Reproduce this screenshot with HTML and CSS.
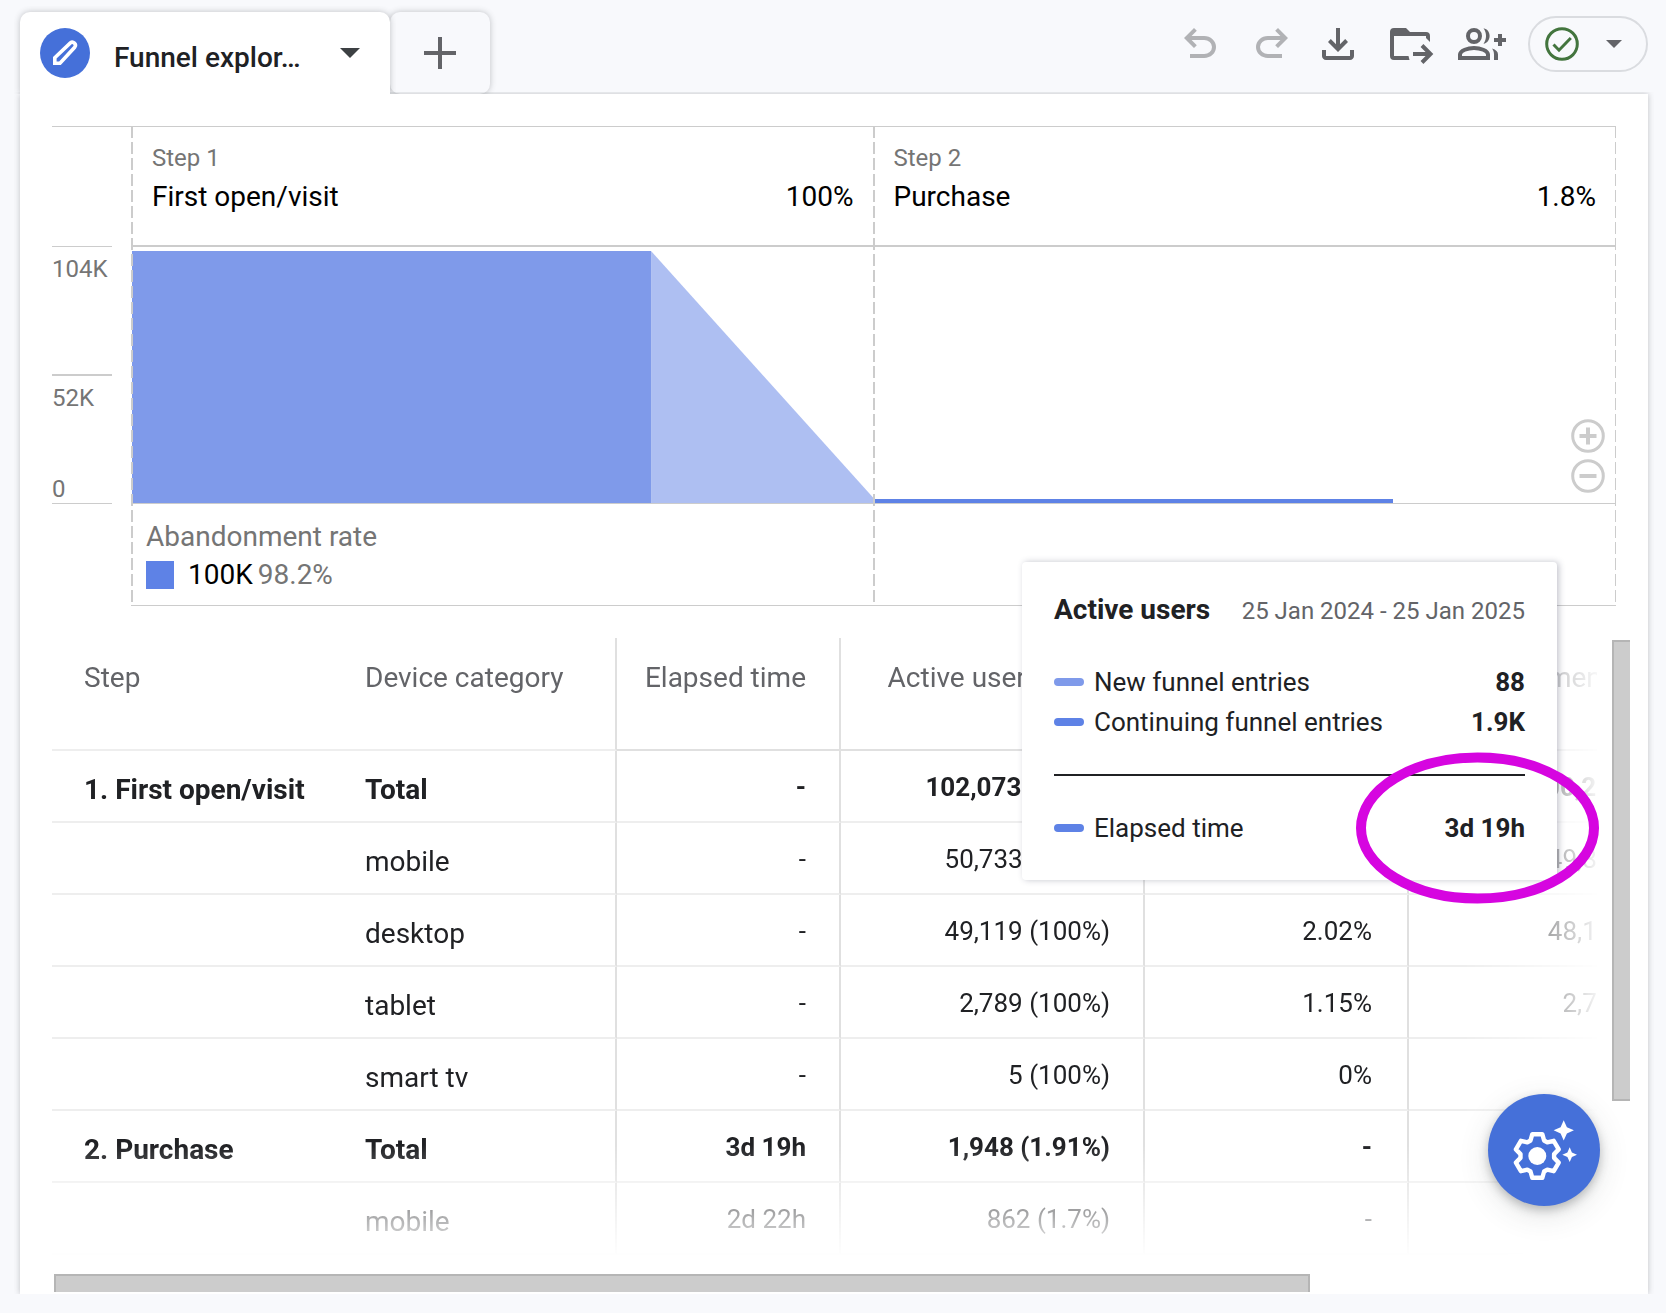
FILE: index.html
```html
<!DOCTYPE html>
<html lang="en">
<head>
<meta charset="utf-8">
<title>Funnel exploration</title>
<link rel="stylesheet" href="styles.css">
</head>
<body>
<header class="topbar">
  <div class="tab tab-active">
    <span class="tab-badge">
      <svg width="50" height="50" viewBox="0 0 50 50" aria-hidden="true"><path d="M14.8 35.2v-5.4L30.4 14.9q2-1.7 4 .2t.3 4.2L20 35.2z" fill="none" stroke="#fff" stroke-width="3.6"/></svg>
    </span>
    <span class="tab-title">Funnel explor…</span>
    <button class="icon-button tab-menu" type="button" aria-label="Tab menu">
      <svg width="20" height="10" viewBox="0 0 20 10"><path d="M0 0h20L10 10z" fill="#3c4043"/></svg>
    </button>
  </div>
  <button class="tab tab-add" type="button" aria-label="Add tab">
    <svg width="32" height="32" viewBox="0 0 32 32"><path d="M16 0v32M0 16h32" stroke="#636468" stroke-width="4"/></svg>
  </button>
  <div class="toolbar">
    <div class="tool-group history">
      <button class="icon-button" type="button" aria-label="Undo" disabled>
        <svg width="48" height="48" viewBox="0 -960 960 960"><path fill="#b1b2b5" d="M280-200v-80h284q63 0 109.500-40T720-420q0-60-46.500-100T564-560H312l104 104-56 56-200-200 200-200 56 56-104 104h252q97 0 166.500 63T800-420q0 94-69.500 157T564-200H280Z"/></svg>
      </button>
      <button class="icon-button" type="button" aria-label="Redo" disabled>
        <svg width="48" height="48" viewBox="0 -960 960 960"><path fill="#b1b2b5" transform="matrix(-1 0 0 1 960 0)" d="M280-200v-80h284q63 0 109.500-40T720-420q0-60-46.500-100T564-560H312l104 104-56 56-200-200 200-200 56 56-104 104h252q97 0 166.500 63T800-420q0 94-69.500 157T564-200H280Z"/></svg>
      </button>
    </div>
    <div class="tool-group files">
      <button class="icon-button" type="button" aria-label="Download">
        <svg width="48" height="48" viewBox="0 -960 960 960"><path fill="#636468" d="M480-320 280-520l56-58 104 104v-326h80v326l104-104 56 58-200 200ZM240-160q-33 0-56.500-23.500T160-240v-120h80v120h480v-120h80v120q0 33-23.500 56.500T720-160H240Z"/></svg>
      </button>
      <button class="icon-button" type="button" aria-label="Move to folder">
        <svg width="48" height="48" viewBox="0 0 48 48"><path fill="#636468" d="M8 8h12l4 4h16q4 0 4 4v6l-4-4v-2H8v20h14.500l1 4H8q-4 0-4-4V12q0-4 4-4z"/><path d="M27 34h18M36 25.500l8.500 8.500-8.500 8.500" fill="none" stroke="#636468" stroke-width="4"/></svg>
      </button>
      <button class="icon-button" type="button" aria-label="Share">
        <svg width="48" height="48" viewBox="0 0 48 48"><g fill="none" stroke="#636468" stroke-width="4"><circle cx="16" cy="16" r="6"/><path d="M2 38v-3.500c0-4 8-6.500 14-6.500s14 2.500 14 6.500V38z"/><path d="M36 20h12M42 14v12"/></g><path fill="#636468" d="M25.500 8.200c8.200 1.500 8.200 14 0 15.600 3.400-4.600 3.400-11 0-15.600zM34 28.500c4 1.200 6 3.300 6 6V40h-4v-5.500c0-2.600-.8-4.600-2-6z"/></svg>
      </button>
    </div>
    <button class="status-pill" type="button" aria-label="Sampling status">
      <svg width="34" height="34" viewBox="0 0 34 34"><g fill="none" stroke="#43753e" stroke-width="3"><circle cx="17" cy="17" r="15.300"/><path d="M8.500 17.500l5.500 5.700L25.800 11"/></g></svg>
      <svg width="16" height="8" viewBox="0 0 16 8"><path d="M0 0h16L8 8z" fill="#636468"/></svg>
    </button>
  </div>
</header>

<main class="panel">
  <section class="chart" aria-label="Funnel chart">
    <div class="axis">
      <div class="tick tick-max">104K</div>
      <div class="tick tick-mid">52K</div>
      <div class="tick tick-zero">0</div>
    </div>
    <div class="step">
      <div class="step-head">
        <div class="step-index">Step 1</div>
        <div class="step-line"><span>First open/visit</span><span>100%</span></div>
      </div>
      <div class="plot">
        <div class="bar bar-new"></div>
        <div class="drop"></div>
      </div>
      <div class="step-foot">
        <div class="rate-title">Abandonment rate</div>
        <div class="rate"><span class="rate-swatch"></span><span class="rate-count">100K</span><span class="rate-share">98.2%</span></div>
      </div>
    </div>
    <div class="step step-last">
      <div class="step-head">
        <div class="step-index">Step 2</div>
        <div class="step-line"><span>Purchase</span><span>1.8%</span></div>
      </div>
      <div class="plot">
        <div class="bar bar-continuing"></div>
        <div class="zoom-controls">
          <button class="icon-button" type="button" aria-label="Zoom in"><svg width="34" height="34" viewBox="0 0 34 34" fill="none" stroke="#ccc" stroke-width="3"><circle cx="17" cy="17" r="15.300"/><path d="M17 8.500v17M8.500 17h17" stroke-width="4"/></svg></button>
          <button class="icon-button" type="button" aria-label="Zoom out"><svg width="34" height="34" viewBox="0 0 34 34" fill="none" stroke="#ccc" stroke-width="3"><circle cx="17" cy="17" r="15.300"/><path d="M8.500 17h17" stroke-width="4"/></svg></button>
        </div>
      </div>
      <div class="step-foot"></div>
    </div>
  </section>

  <section class="results">
    <div class="table-view">
      <table class="funnel-table">
        <colgroup><col class="c-step"><col class="c-device"><col class="c-elapsed"><col class="c-users"><col class="c-completion"><col class="c-abandon"></colgroup>
        <thead>
          <tr><th scope="col">Step</th><th scope="col">Device category</th><th scope="col">Elapsed time</th><th scope="col">Active users (% of Step 1)</th><th scope="col">Completion rate</th><th scope="col">Abandonments</th></tr>
        </thead>
        <tbody>
          <tr class="total"><th scope="row">1. First open/visit</th><th>Total</th><td>-</td><td>102,073 (100%)</td><td>1.91%</td><td>100,205</td></tr>
          <tr><th></th><th scope="row">mobile</th><td>-</td><td>50,733 (100%)</td><td>1.7%</td><td>49,871</td></tr>
          <tr><th></th><th scope="row">desktop</th><td>-</td><td>49,119 (100%)</td><td>2.02%</td><td>48,127</td></tr>
          <tr><th></th><th scope="row">tablet</th><td>-</td><td>2,789 (100%)</td><td>1.15%</td><td>2,757</td></tr>
          <tr><th></th><th scope="row">smart tv</th><td>-</td><td>5 (100%)</td><td>0%</td><td>5</td></tr>
          <tr class="total"><th scope="row">2. Purchase</th><th>Total</th><td>3d 19h</td><td>1,948 (1.91%)</td><td>-</td><td>-</td></tr>
          <tr><th></th><th scope="row">mobile</th><td>2d 22h</td><td>862 (1.7%)</td><td>-</td><td>-</td></tr>
        </tbody>
      </table>
    </div>
    <div class="scroll-y"><div class="thumb-y"></div></div>
    <div class="scroll-x"><div class="thumb-x"></div></div>
  </section>

  <aside class="tooltip">
    <div class="tip-head"><strong>Active users</strong><span>25 Jan 2024 - 25 Jan 2025</span></div>
    <div class="tip-row"><i class="dash dash-new"></i><span>New funnel entries</span><b>88</b></div>
    <div class="tip-row"><i class="dash"></i><span>Continuing funnel entries</span><b>1.9K</b></div>
    <hr>
    <div class="tip-row"><i class="dash"></i><span>Elapsed time</span><b>3d 19h</b></div>
    <svg class="highlight" width="243" height="152" viewBox="0 0 243 152" aria-hidden="true"><ellipse cx="121.500" cy="76" rx="116.500" ry="70.500" fill="none" stroke="#d605e0" stroke-width="10"/></svg>
  </aside>

  <button class="fab" type="button" aria-label="Settings suggestions">
    <svg width="112" height="112" viewBox="0 0 112 112" fill="#fff">
      <g transform="translate(49.300 62)">
        <path fill="none" stroke="#fff" stroke-width="4.400" stroke-linejoin="round" d="M-5-21.800H5L6.800-15.500 10-13.600 16.400-15.200 21.400-6.600 16.800-1.900V1.900L21.400 6.600 16.400 15.200 10 13.600 6.800 15.500 5 21.800H-5L-6.800 15.500-10 13.600-16.400 15.200-21.400 6.600-16.800 1.900V-1.900L-21.400-6.600-16.400-15.200-10-13.600-6.800-15.500z"/>
        <circle r="9"/>
      </g>
      <path d="M75.700 26.300l3.200 6.900 7 3.100-7 3.200-3.200 7-3.100-7-7-3.200 7-3.100zM81.700 53.300l2.200 5.100 5.100 2.300-5.100 2.200-2.200 5.200-2.300-5.200-5.100-2.200 5.100-2.300z"/>
    </svg>
  </button>
</main>
</body>
</html>
```
FILE: styles.css
```css
* {
  box-sizing: border-box;
}

body {
  margin: 0;
  padding: 12px 18px 19px 20px;
  background: #f8f9fc;
  color: #202124;
  font-family: Roboto, "Liberation Sans", sans-serif;
  font-size: 28px;
  line-height: 32px;
  overflow-x: hidden;
}

button {
  font: inherit;
  color: inherit;
}

svg {
  display: block;
}

/* Top bar */
.topbar {
  display: flex;
  height: 82px;
}

.tab {
  display: flex;
  align-items: center;
  height: 82px;
  border-radius: 10px;
  box-shadow: 0 0 6px rgba(60, 64, 67, 0.3);
}

.tab-active {
  position: relative;
  z-index: 1;
  width: 370px;
  padding: 0 30px 0 20px;
  border-radius: 10px 10px 0 0;
  background: #fff;
  clip-path: inset(-6px -6px 0 -6px);
}

.tab-badge {
  border-radius: 50%;
  background: #4570d9;
}

.tab-title {
  flex: 1;
  padding: 10px 0 0 24px;
  font-weight: 500;
}

.icon-button {
  padding: 0;
  border: 0;
  background: none;
}

.tab-add {
  justify-content: center;
  width: 100px;
  padding: 0;
  border: 0;
  background: #f8f9fc;
}

.toolbar {
  display: flex;
  align-items: center;
  height: 56px;
  margin: 4px 0 0 auto;
}

.tool-group {
  display: flex;
  gap: 24px;
}

.history {
  margin-right: 18px;
}

.files {
  margin-right: 22px;
}

.status-pill {
  display: flex;
  align-items: center;
  justify-content: space-between;
  width: 120px;
  height: 56px;
  padding: 0 24px 0 15px;
  border: 2px solid #dadce0;
  border-radius: 28px;
  background: none;
}

/* Content panel */
.panel {
  position: relative;
  padding: 32px 0 2px 32px;
  background: #fff;
  box-shadow: 0 0 6px rgba(60, 64, 67, 0.3);
  clip-path: inset(-2px -6px 0 -6px);
}

/* Funnel chart */
.chart {
  display: grid;
  grid-template-columns: 79px 1fr 1fr;
  margin-right: 32px;
  border-top: 1px solid #ccc;
}

.axis {
  width: 60px;
  padding-top: 119px;
  color: #757575;
  font-size: 24px;
  line-height: 28px;
}

.tick {
  padding-top: 8px;
  border-top: 1px solid #ccc;
}

.tick-max {
  height: 128px;
}

.tick-mid {
  height: 101px;
  border-top-width: 2px;
}

.tick-zero {
  padding: 0;
  border-top: 0;
  border-bottom: 1px solid #ccc;
}

.step {
  position: relative;
}

.step::before,
.step-last::after {
  content: "";
  position: absolute;
  top: 0;
  bottom: 1px;
  left: 0;
  width: 2px;
  background: repeating-linear-gradient(#ccc 0 11px, transparent 11px 15px, #ccc 15px 16px);
}

.step::before {
  z-index: 1;
}

.step-last {
  margin-left: -1px;
}

.step-last::after {
  right: 0;
  left: auto;
  width: 1px;
}

.step-head {
  height: 120px;
  padding: 17px 20px 0 21px;
  border-bottom: 2px solid #ccc;
  color: #000;
}

.step-index {
  margin-bottom: 9px;
  color: #757575;
  font-size: 24px;
  line-height: 28px;
}

.step-line {
  display: flex;
  justify-content: space-between;
}

.plot {
  position: relative;
  display: flex;
  align-items: flex-end;
  height: 257px;
  padding-left: 1px;
  border-bottom: 1px solid #ccc;
}

.bar {
  width: 70%;
}

.bar-new {
  height: 252px;
  background: #7f9aea;
}

.bar-continuing {
  height: 4px;
  background: #5e82e6;
}

.drop {
  width: 30%;
  height: 252px;
  background: #aebff2;
  clip-path: polygon(0 0, 100% 98%, 100% 100%, 0 100%);
}

.zoom-controls {
  position: absolute;
  right: 11px;
  bottom: 10px;
  display: grid;
  gap: 6px;
}

.step-foot {
  height: 102px;
  padding: 17px 15px 0;
  border-bottom: 1px solid #ccc;
}

.rate-title,
.rate-share {
  color: #757575;
}

.rate {
  display: flex;
  align-items: center;
  margin-top: 6px;
  color: #000;
}

.rate-swatch {
  width: 28px;
  height: 28px;
  margin-right: 14px;
  background: #5e82e6;
}

.rate-count {
  margin-right: 5px;
}

/* Results table */
.results {
  display: grid;
  grid-template-columns: 1fr 18px;
  column-gap: 15px;
  margin: 32px 18px 0 0;
}

.table-view {
  min-width: 0;
  overflow: hidden;
  mask-image: linear-gradient(to left, rgba(0, 0, 0, 0.05), #000 134px), linear-gradient(to top, rgba(0, 0, 0, 0.04), #000 110px);
  mask-composite: intersect;
}

.funnel-table {
  width: 1609px;
  table-layout: fixed;
  border-spacing: 0;
}

.c-step { width: 280px; }
.c-device { width: 285px; }
.c-elapsed { width: 224px; }
.c-users { width: 304px; }
.c-completion { width: 264px; }
.c-abandon { width: 252px; }

.funnel-table th,
.funnel-table td {
  height: 72px;
  padding: 23px 33px 0 32px;
  border-bottom: 2px solid #eee;
  vertical-align: top;
  text-align: left;
  font-weight: 400;
}

.funnel-table td {
  padding-top: 20px;
  font-size: 26px;
}

.funnel-table th:nth-child(n + 2),
.funnel-table td {
  border-right: 2px solid #e0e0e0;
}

.funnel-table thead th {
  height: 113px;
  padding-top: 24px;
  color: #636468;
}

.funnel-table th:first-child,
.funnel-table th:nth-child(2) {
  padding-right: 0;
}

.funnel-table th:nth-child(2) {
  padding-left: 33px;
}

.funnel-table td:nth-child(5) {
  padding-right: 35px;
}

.funnel-table thead th:nth-child(n + 3) {
  padding-left: 26px;
  border-bottom-color: #e0e0e0;
}

.funnel-table thead th:nth-child(6) {
  padding-right: 37px;
}

.funnel-table th:nth-child(n + 3),
.funnel-table td {
  text-align: right;
}

.funnel-table .total th,
.funnel-table .total td {
  font-weight: 700;
}

.scroll-y {
  padding-top: 2px;
}

.thumb-y {
  height: 75%;
  border: solid #b5b5b5;
  border-width: 2px 0 2px 2px;
  background: #ccc;
}

.scroll-x {
  margin: 19px 0 0 2px;
}

.thumb-x {
  width: 1256px;
  max-width: 100%;
  height: 18px;
  border: solid #b5b5b5;
  border-width: 2px 2px 0 2px;
  background: #ccc;
}

/* Chart tooltip */
.tooltip {
  position: absolute;
  top: 468px;
  right: 91px;
  width: 535px;
  padding: 32px 32px 28px;
  border-radius: 4px;
  background: #fff;
  box-shadow: 2px 0 6px rgba(60, 64, 90, 0.3);
  font-size: 26px;
}

.tip-head {
  display: flex;
  align-items: baseline;
  justify-content: space-between;
  margin-bottom: 40px;
}

.tip-head strong {
  font-size: 28px;
}

.tip-head span {
  color: #636468;
  font-size: 24px;
  line-height: 24px;
}

.tip-row {
  display: flex;
  align-items: center;
  gap: 10px;
  margin-bottom: 8px;
}

.tip-row b {
  margin-left: auto;
}

.dash {
  width: 30px;
  height: 8px;
  border-radius: 4px;
  background: #5e82e6;
}

.dash-new {
  background: #7f9aea;
}

.tooltip hr {
  height: 2px;
  margin: 36px 0;
  border: 0;
  background: #202124;
}

.highlight {
  position: absolute;
  right: -42px;
  bottom: -24px;
}

/* Floating action button */
.fab {
  position: absolute;
  right: 48px;
  bottom: 88px;
  width: 112px;
  height: 112px;
  padding: 0;
  border: 0;
  border-radius: 50%;
  background: #4570d9;
  box-shadow: 0 4px 10px rgba(60, 64, 67, 0.3), 0 8px 30px rgba(60, 64, 67, 0.15);
}
```
